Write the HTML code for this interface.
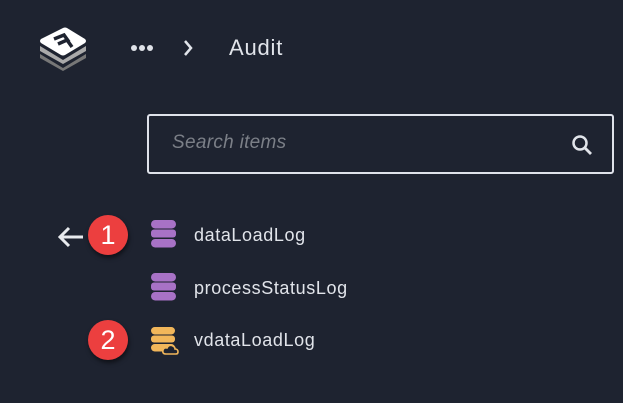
<!DOCTYPE html><html><head><style>
body{margin:0;width:623px;height:403px;background:#1e2330;font-family:"Liberation Sans",sans-serif;position:relative;overflow:hidden;color:#dfe2e8}
.a{position:absolute}
.t{position:absolute;left:194px;font-size:18px;letter-spacing:0.6px;color:#e1e4ea}
.b{position:absolute;width:40px;height:40px;border-radius:50%;background:#ec3f3f;color:#fff;font-size:27px;text-align:center;line-height:40px;box-shadow:1px 3px 4px rgba(0,0,0,.5)}
</style></head><body>
<svg class="a" style="left:36px;top:24px" width="54" height="48" viewBox="0 0 54 48">
<path d="M4 30 L27 44 L50 30 L50 34 L27 47 L4 34Z" fill="#777"/>
<path d="M4 22 L27 36 L50 22 L50 27 L27 40 L4 27Z" fill="#aaa"/>
<path d="M27 4 Q29 3 31 4 L49 15 Q51 17 49 19 L29 31 Q27 32 25 31 L5 19 Q3 17 5 15Z" fill="#fff"/>
<path d="M18 15 L28 11 L33 18 M22 20 L31 16 L36 23" stroke="#1e2330" stroke-width="3.5" fill="none"/>
</svg>
<div class="a" style="left:131px;top:45px;line-height:0">
<span style="display:inline-block;width:6px;height:6px;border-radius:50%;background:#dfe2e8;margin-right:2px"></span><span style="display:inline-block;width:6px;height:6px;border-radius:50%;background:#dfe2e8;margin-right:2px"></span><span style="display:inline-block;width:6px;height:6px;border-radius:50%;background:#dfe2e8"></span></div>
<svg class="a" style="left:182px;top:39px" width="12" height="18"><path d="M3 2 L9 9 L3 16" stroke="#e1e4ea" stroke-width="2.5" fill="none"/></svg>
<div class="a" style="left:229px;top:35px;font-size:22px;letter-spacing:0.8px;color:#e1e4ea">Audit</div>
<div class="a" style="left:147px;top:114px;width:463px;height:56px;border:2px solid #dfe2ea;border-radius:3px"></div>
<div class="a" style="left:172px;top:132px;font-size:19px;letter-spacing:0.3px;font-style:italic;color:#7b7f87">Search items</div>
<svg class="a" style="left:571px;top:134px" width="24" height="22"><circle cx="9" cy="9" r="6.5" stroke="#e1e4ea" stroke-width="2.5" fill="none"/><path d="M14 14 L20 20" stroke="#e1e4ea" stroke-width="2.8"/></svg>
<svg class="a" style="left:56px;top:225px" width="30" height="24"><path d="M27 12 H4 M13 3 L4 12 L13 21" stroke="#e8eaee" stroke-width="3" fill="none"/></svg>
<div class="b" style="left:88px;top:215px">1</div>
<div class="b" style="left:88px;top:320px">2</div>
<svg class="a" style="left:150px;top:219px" width="28" height="30"><g fill="#a872c6"><rect x="1" y="1" width="25" height="8.5" rx="4.2"/><rect x="1" y="10.5" width="25" height="8" rx="3"/><rect x="1" y="20" width="25" height="8.5" rx="4.2"/></g></svg>
<svg class="a" style="left:150px;top:272px" width="28" height="30"><g fill="#a872c6"><rect x="1" y="1" width="25" height="8.5" rx="4.2"/><rect x="1" y="10.5" width="25" height="8" rx="3"/><rect x="1" y="20" width="25" height="8.5" rx="4.2"/></g></svg>
<svg class="a" style="left:150px;top:326px" width="30" height="30"><g fill="#f1b65a"><rect x="1" y="1" width="24" height="7.5" rx="3.7"/><rect x="1" y="9.5" width="24" height="7" rx="3"/><rect x="1" y="18" width="24" height="7.5" rx="3.7"/></g><path d="M16 28 Q12 28 13 24 Q14 21 17 22 Q19 18 23 20 Q25 21 25 23 Q28 23 28 26 Q28 28 26 28Z" fill="#1e2330" stroke="#f1b65a" stroke-width="1.6"/></svg>
<div class="t" style="top:225px">dataLoadLog</div>
<div class="t" style="top:278px">processStatusLog</div>
<div class="t" style="top:330px">vdataLoadLog</div>
</body></html>
